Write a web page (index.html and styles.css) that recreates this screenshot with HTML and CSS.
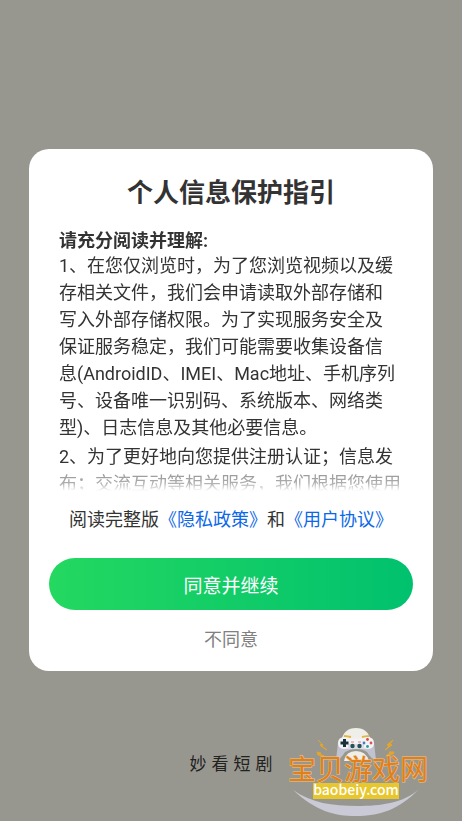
FILE: index.html
```html
<!DOCTYPE html>
<html lang="zh-CN">
<head>
<meta charset="utf-8">
<meta name="viewport" content="width=device-width, initial-scale=1">
<title>个人信息保护指引</title>
<link rel="stylesheet" href="styles.css">
</head>
<body>
<main class="dialog">
  <h1 class="title">个人信息保护指引</h1>
  <section class="policy">
    <h2 class="lead">请充分阅读并理解:</h2>
    <p class="copy">1、在您仅浏览时，为了您浏览视频以及缓<br>存相关文件，我们会申请读取外部存储和<br>写入外部存储权限。为了实现服务安全及<br>保证服务稳定，我们可能需要收集设备信<br>息(AndroidID、IMEI、Mac地址、手机序列<br>号、设备唯一识别码、系统版本、网络类<br>型)、日志信息及其他必要信息。</p>
    <p class="copy">2、为了更好地向您提供注册认证；信息发<br>布；交流互动等相关服务，我们根据您使用</p>
  </section>
  <p class="links">阅读完整版<a href="#privacy">《隐私政策》</a>和<a href="#terms">《用户协议》</a></p>
  <button class="agree" type="button">同意并继续</button>
  <button class="decline" type="button">不同意</button>
</main>
<footer class="brand"><span>妙</span><span>看</span><span>短</span><span>剧</span></footer>
<svg class="watermark" viewBox="0 0 160 106" role="img" aria-label="宝贝游戏网">
  <path d="M13 75C36 96 54 101 76 101C99 101 119 95 139 74C124 88 101 91 77 91C52 91 32 88 13 75Z" fill="#c9cad5"/>
  <path d="M61 26Q64 13 76 13Q88 13 91 26Z" fill="#efeee9"/>
  <path d="M64 46Q66 36 76 36Q86 36 89 46Z" fill="#efeee9"/>
  <path d="M58 28L56 45Q61 44 65 37Q70 34 76 34Q83 34 87 37Q91 44 96 45L94 28Z" fill="#c0c2d0"/>
  <path d="M64 21L71 22M82 22L89 21" stroke="#e2b53e" stroke-width="2"/>
  <path d="M58 28Q58 22 65 22Q76 25 87 22Q94 22 94 28Q94 34 87 34Q76 31 65 34Q58 34 58 28Z" fill="#f3f2f5"/>
  <path d="M68 29H84V34H68Z" fill="#dddde6"/>
  <path d="M64.500 24V32M60.500 28H68.500" stroke="#17313b" stroke-width="3"/>
  <circle cx="72.500" cy="31" r="2.200" fill="#24515b"/><circle cx="79.500" cy="31" r="2.200" fill="#24515b"/>
  <circle cx="87.500" cy="24.500" r="1.400" fill="#df4747"/><circle cx="91" cy="28" r="1.400" fill="#d9534f"/><circle cx="87.500" cy="31.500" r="1.400" fill="#2f9b94"/><circle cx="84" cy="28" r="1.400" fill="#3f83be"/>
  <path d="M71 27H74M78 27H81" stroke="#e28281"/>
  <path d="M38 25L43 30L41 31L47 35L40 30L42 29ZM37 37L41 38L40 39L44 41L38 40ZM113 25L107 30L109 31L105 35L112 30L110 29ZM114 37L109 37L110 38L106 41L113 39Z" fill="#e5a52a" stroke="#e5a52a"/>
  <text class="wm-name" x="8" y="65">宝贝游戏网</text>
  <rect x="33" y="68" width="86" height="16" fill="#e8c72d"/>
  <text class="wm-url" x="76" y="80" text-anchor="middle">baobeiy.com</text>
</svg>
</body>
</html>
```
FILE: styles.css
```css
* {
  box-sizing: border-box;
}

body {
  margin: 0;
  min-height: 100vh;
  position: relative;
  display: flex;
  flex-direction: column;
  padding: 149px 29px 0;
  background: #98978f;
  color: #333;
  font: 18px/27px Roboto, "Noto Sans CJK SC", sans-serif;
}

h1, h2, p {
  margin: 0;
}

.dialog {
  display: flex;
  flex-direction: column;
  padding: 25px 20px 16px;
  border-radius: 20px;
  background: #fff;
}

.title {
  font-size: 26px;
  line-height: 38px;
  text-align: center;
}

.policy {
  height: 262px;
  margin: 17px 0 0 10px;
  overflow: hidden;
  white-space: nowrap;
  mask-image: linear-gradient(#000 234px, #0008 242px, #0006 254px, transparent 262px);
}

.lead {
  font-size: 18px;
  line-height: 23px;
}

.copy + .copy {
  margin-top: 2px;
}

.links {
  margin-top: 15px;
  text-align: center;
}

.links a {
  color: #0c68e8;
  text-decoration: none;
}

.agree,
.decline {
  border: 0;
  font-family: inherit;
}

.agree {
  height: 52px;
  margin-top: 25px;
  border-radius: 26px;
  background: linear-gradient(90deg, #24d860, #00c16e);
  color: #fff;
  font-size: 19px;
}

.decline {
  align-self: center;
  margin-top: 15px;
  padding: 0 16px;
  background: none;
  color: #808080;
  font-size: 18px;
  line-height: 30px;
}

.brand {
  display: flex;
  justify-content: center;
  gap: 5px;
  margin-top: 80px;
  color: #22221f;
  font-size: 17px;
}

.watermark {
  position: absolute;
  right: 22px;
  bottom: 0;
  width: 160px;
}

.wm-name {
  fill: #e27f18;
  stroke: #efc48a;
  stroke-width: 1px;
  paint-order: stroke;
  font: 28px "Noto Sans CJK SC", sans-serif;
}

.wm-url {
  fill: #fff;
  font: 500 14px "Noto Sans CJK SC", sans-serif;
}
```
